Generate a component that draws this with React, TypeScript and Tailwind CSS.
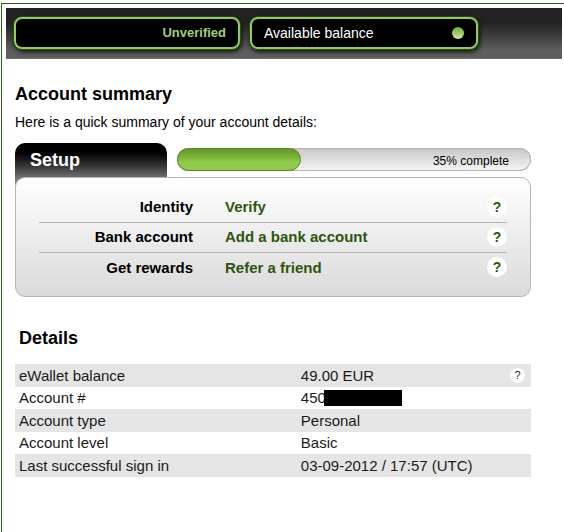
const setupPercent = 35

const setupSteps = [
  { title: 'Identity', action: 'Verify' },
  { title: 'Bank account', action: 'Add a bank account' },
  { title: 'Get rewards', action: 'Refer a friend' },
]

const details = [
  { label: 'eWallet balance', value: '49.00 EUR', help: true },
  { label: 'Account #', value: '450', masked: true },
  { label: 'Account type', value: 'Personal' },
  { label: 'Account level', value: 'Basic' },
  { label: 'Last successful sign in', value: '03-09-2012 / 17:57 (UTC)' },
]

function TopBar() {
  return (
    <header className="mr-0.5 flex h-[51px] gap-2.5 border-b border-[#6c6c6c] bg-linear-to-b from-[#232323] from-30% to-[#5e5e5e] to-85% px-2 pt-[9px]">
      <div className="flex h-8 w-[226px] items-center justify-end rounded-lg border-2 border-[#95c765] bg-black px-3 text-[13px] font-bold text-[#a3cf74] shadow-[0_0_0_1px_#2b4d0f,1px_2px_4px_1px_#0a1a00]">
        Unverified
      </div>
      <button className="flex h-8 w-[228px] items-center justify-between rounded-lg border-2 border-[#95c765] bg-black px-3 text-sm text-white shadow-[0_0_0_1px_#2b4d0f,1px_2px_4px_1px_#0a1a00]">
        Available balance
        <span className="size-3 rounded-full bg-linear-to-b from-[#6fa92d] to-[#cdeaa4]"></span>
      </button>
    </header>
  )
}

function Setup() {
  return (
    <section className="mt-[11px]">
      <div className="flex h-[34px] items-start gap-2.5">
        <h2 className="h-[42px] w-[152px] shrink-0 rounded-t-[10px] bg-linear-to-b from-black from-10% to-[#989898] pt-[5px] pl-[15px] text-lg leading-6 font-bold text-white">
          Setup
        </h2>
        <div
          role="progressbar"
          aria-label="Setup"
          aria-valuenow={setupPercent}
          className="mt-[5px] grid h-[23px] flex-1 rounded-full bg-linear-to-b from-[#c6c6c6] to-[#f6f6f6] inset-ring inset-ring-[#b4b4b4]"
        >
          <div
            className="col-start-1 row-start-1 rounded-full border border-[#56851f] bg-linear-to-b from-[#6b9c2f] from-10% via-[#82b93b] via-45% to-[#8fca4a] to-60%"
            style={{ width: `${setupPercent}%` }}
          ></div>
          <span className="col-start-1 row-start-1 self-center justify-self-end pt-0.5 pr-[22px] text-xs">
            {setupPercent}% complete
          </span>
        </div>
      </div>

      <ul className="relative rounded-[10px] border border-[#b5b5b5] bg-linear-to-b from-white to-[#dadada] px-[23px] pt-[15px] pb-[13px]">
        {setupSteps.map((step) => (
          <li
            key={step.title}
            className="flex h-[30px] items-center border-b border-[#b3b3b3] text-[15px] font-bold last:border-b-0"
          >
            <span className="w-1/3 pr-0.5 text-right">{step.title}</span>
            <a href="#" className="flex-1 pl-[30px] text-[#2c560c]">{step.action}</a>
            <button
              aria-label={`Help: ${step.title}`}
              className="mb-0.5 size-5 rounded-full bg-white text-sm leading-5 text-[#2c560c]"
            >
              ?
            </button>
          </li>
        ))}
      </ul>
    </section>
  )
}

function Details() {
  return (
    <section className="pt-[29px]">
      <h2 className="pl-1 text-lg leading-6 font-bold">Details</h2>
      <table className="mt-[14px] w-full text-[15px] leading-5 text-[#1a1a1a]">
        <tbody>
          {details.map((row) => (
            <tr key={row.label} className="h-[22px] odd:h-[23px] odd:bg-[#e5e5e5]">
              <th scope="row" className="w-[55%] py-0 pl-1 text-left font-normal">{row.label}</th>
              <td className="py-0 pr-1.5 pl-0.5">
                <div className="flex items-center">
                  {row.value}
                  {row.masked && <span className="-ml-0.5 h-4 w-[78px] bg-black"></span>}
                  {row.help && (
                    <button
                      aria-label={`Help: ${row.label}`}
                      className="ml-auto size-[15px] rounded-full bg-white text-[11px] leading-[15px]"
                    >
                      ?
                    </button>
                  )}
                </div>
              </td>
            </tr>
          ))}
        </tbody>
      </table>
    </section>
  )
}

export default function App() {
  return (
    <div className="flex min-h-screen flex-col bg-white pt-[3px] pl-px font-['Liberation_Sans',Arial,sans-serif] text-black">
      <div className="flex-1 border-t border-l border-[#2f5c14] pt-1 pl-1">
        <TopBar />
        <main className="pt-[23px] pr-[33px] pb-8 pl-[9px]">
          <h1 className="text-lg leading-6 font-bold">Account summary</h1>
          <p className="mt-1.5 text-sm leading-5">Here is a quick summary of your account details:</p>
          <Setup />
          <Details />
        </main>
      </div>
    </div>
  )
}
